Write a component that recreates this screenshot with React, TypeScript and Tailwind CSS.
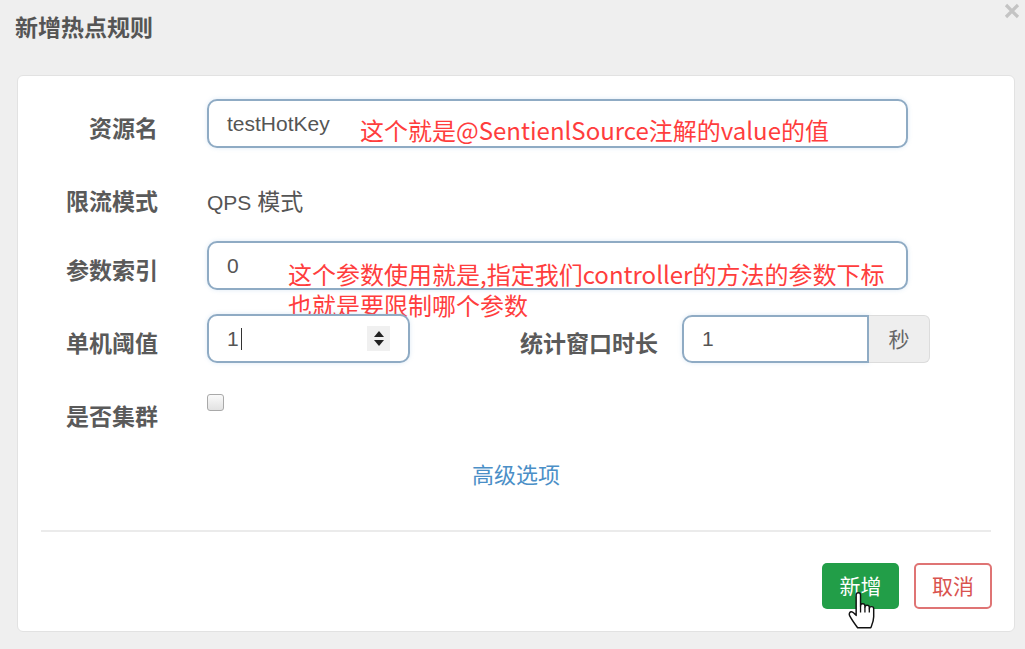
import React from "react";

/** Hand pointer cursor drawn over the submit button. */
function HandCursor({ className }: { className?: string }) {
  return (
    <svg viewBox="0 0 20 26" className={className} fill="none">
      <path
        d="M6 16V2A1.5 1.5 0 0 1 9 2V9.5A1.5 1.5 0 0 1 12 9.5V10.5A1.5 1.5 0 0 1 15 10.5V11.5A1.5 1.5 0 0 1 18 11.5V17C18 20 17 22 16 24.5H7C5.5 22.5 3 19 1.6 16.4C1 15.2 1.3 13.8 2.4 13.5C3.4 13.3 4.3 14 6 16Z"
        fill="#fff"
        stroke="#111"
        strokeWidth="1"
        strokeLinejoin="round"
      />
      <path d="M9 9.5V14M12 10.5V14M15 11.5V14" stroke="#111" strokeWidth="0.9" />
    </svg>
  );
}

const label =
  "font-['Noto_Sans_CJK_SC',sans-serif] text-[23px] font-bold text-[#5a5a5a] text-right";
const inputBox =
  "relative flex h-[49px] items-center rounded-[10px] border-2 border-[#8fabc4] bg-white pl-[18px] shadow-[0_0_4px_rgba(120,170,220,0.25)]";
const inputText =
  "font-['Liberation_Sans','Noto_Sans_CJK_SC',sans-serif] text-[21px] text-[#555]";
const note =
  "font-['Noto_Sans_CJK_SC',sans-serif] text-[24px] leading-[31px] text-[#ff3d3d] whitespace-nowrap";

export default function App() {
  return (
    <div className="relative h-[649px] w-[1025px] overflow-hidden bg-[#efefef]">
      <header className="flex h-[75px] items-start justify-between pl-[15px] pr-[5px] pt-[11px]">
        <h1 className="font-['Noto_Sans_CJK_SC',sans-serif] text-[23px] font-bold leading-[30px] text-[#555]">
          新增热点规则
        </h1>
        <button type="button" aria-label="关闭" className="-mt-[8px]">
          <svg viewBox="0 0 16 16" className="h-[16px] w-[16px]">
            <path d="M2 2L14 14M14 2L2 14" stroke="#c4c4c4" strokeWidth="3.2" />
          </svg>
        </button>
      </header>

      <section className="ml-[17px] mr-[10px] flex h-[557px] flex-col rounded-[6px] border border-[#e2e2e2] bg-white pt-[23px]">
        {/* 资源名 */}
        <div className="flex items-center gap-[49px]">
          <span className={`${label} w-[140px] pt-[7px]`}>资源名</span>
          <div className={`${inputBox} w-[701px]`}>
            <span className={inputText}>testHotKey</span>
            <span className={`${note} absolute left-[151px] top-[13px]`}>
              这个就是@SentienlSource注解的value的值
            </span>
          </div>
        </div>

        {/* 限流模式 */}
        <div className="mt-[28px] flex h-[49px] items-center gap-[49px]">
          <span className={`${label} w-[140px]`}>限流模式</span>
          <span className={inputText}>
            QPS <span className="font-['Noto_Sans_CJK_SC',sans-serif] text-[23px]">模式</span>
          </span>
        </div>

        {/* 参数索引 */}
        <div className="mt-[16px] flex items-center gap-[49px]">
          <span className={`${label} w-[140px] pt-[7px]`}>参数索引</span>
          <div className={`${inputBox} w-[701px]`}>
            <span className={inputText}>0</span>
            <div className={`${note} absolute left-[79px] top-[15px]`}>
              <div>这个参数使用就是,指定我们controller的方法的参数下标</div>
              <div>也就是要限制哪个参数</div>
            </div>
          </div>
        </div>

        {/* 单机阈值 / 统计窗口时长 */}
        <div className="mt-[24px] flex items-center">
          <span className={`${label} w-[140px] pt-[7px]`}>单机阈值</span>
          <div className={`${inputBox} ml-[49px] h-[48px] w-[203px]`}>
            <span className={inputText}>1</span>
            <span className="ml-[2px] h-[22px] w-px bg-[#333]" />
            <div className="absolute right-[18px] top-[10px] flex h-[25px] w-[23px] flex-col items-center justify-center gap-[3px] bg-[#f0f0f0]">
              <svg viewBox="0 0 10 6" className="h-[6px] w-[10px]">
                <path d="M0 6L5 0L10 6Z" fill="#222" />
              </svg>
              <svg viewBox="0 0 10 6" className="h-[6px] w-[10px]">
                <path d="M0 0L5 6L10 0Z" fill="#222" />
              </svg>
            </div>
          </div>
          <span className={`${label} w-[248px] pt-[7px]`}>统计窗口时长</span>
          <div className="ml-[24px] flex h-[48px] w-[248px]">
            <div className="flex w-[187px] items-center rounded-l-[10px] border-2 border-[#8fabc4] pl-[18px] shadow-[0_0_4px_rgba(120,170,220,0.25)]">
              <span className={inputText}>1</span>
            </div>
            <div className="flex flex-1 items-center justify-center rounded-r-[6px] border border-l-0 border-[#dcdcdc] bg-[#eeeeee] font-['Noto_Sans_CJK_SC',sans-serif] text-[21px] text-[#666]">
              秒
            </div>
          </div>
        </div>

        {/* 是否集群 */}
        <div className="mt-[31px] flex items-start gap-[49px]">
          <span className={`${label} mt-[7px] w-[140px] leading-[28px]`}>是否集群</span>
          <span className="h-[17px] w-[17px] rounded-[3px] border border-[#a9a9a9] bg-gradient-to-b from-[#fafafa] to-[#e2e2e2]" />
        </div>

        <div className="mt-[30px] text-center font-['Noto_Sans_CJK_SC',sans-serif] text-[22px] leading-[28px] text-[#4b8fc7]">
          高级选项
        </div>

        <div className="mx-[23px] mt-[43px] h-[2px] bg-[#ebebeb]" />

        <div className="mt-[31px] flex justify-end gap-[15px] pr-[22px]">
          <button
            type="button"
            className="relative h-[46px] w-[77px] rounded-[5px] bg-[#229e48] font-['Noto_Sans_CJK_SC',sans-serif] text-[21px] text-white"
          >
            新增
            <HandCursor className="absolute left-[25px] top-[29px] h-[38px] w-[30px]" />
          </button>
          <button
            type="button"
            className="h-[46px] w-[78px] rounded-[5px] border-2 border-[#df7474] bg-white font-['Noto_Sans_CJK_SC',sans-serif] text-[21px] text-[#d9534f]"
          >
            取消
          </button>
        </div>
      </section>
    </div>
  );
}
